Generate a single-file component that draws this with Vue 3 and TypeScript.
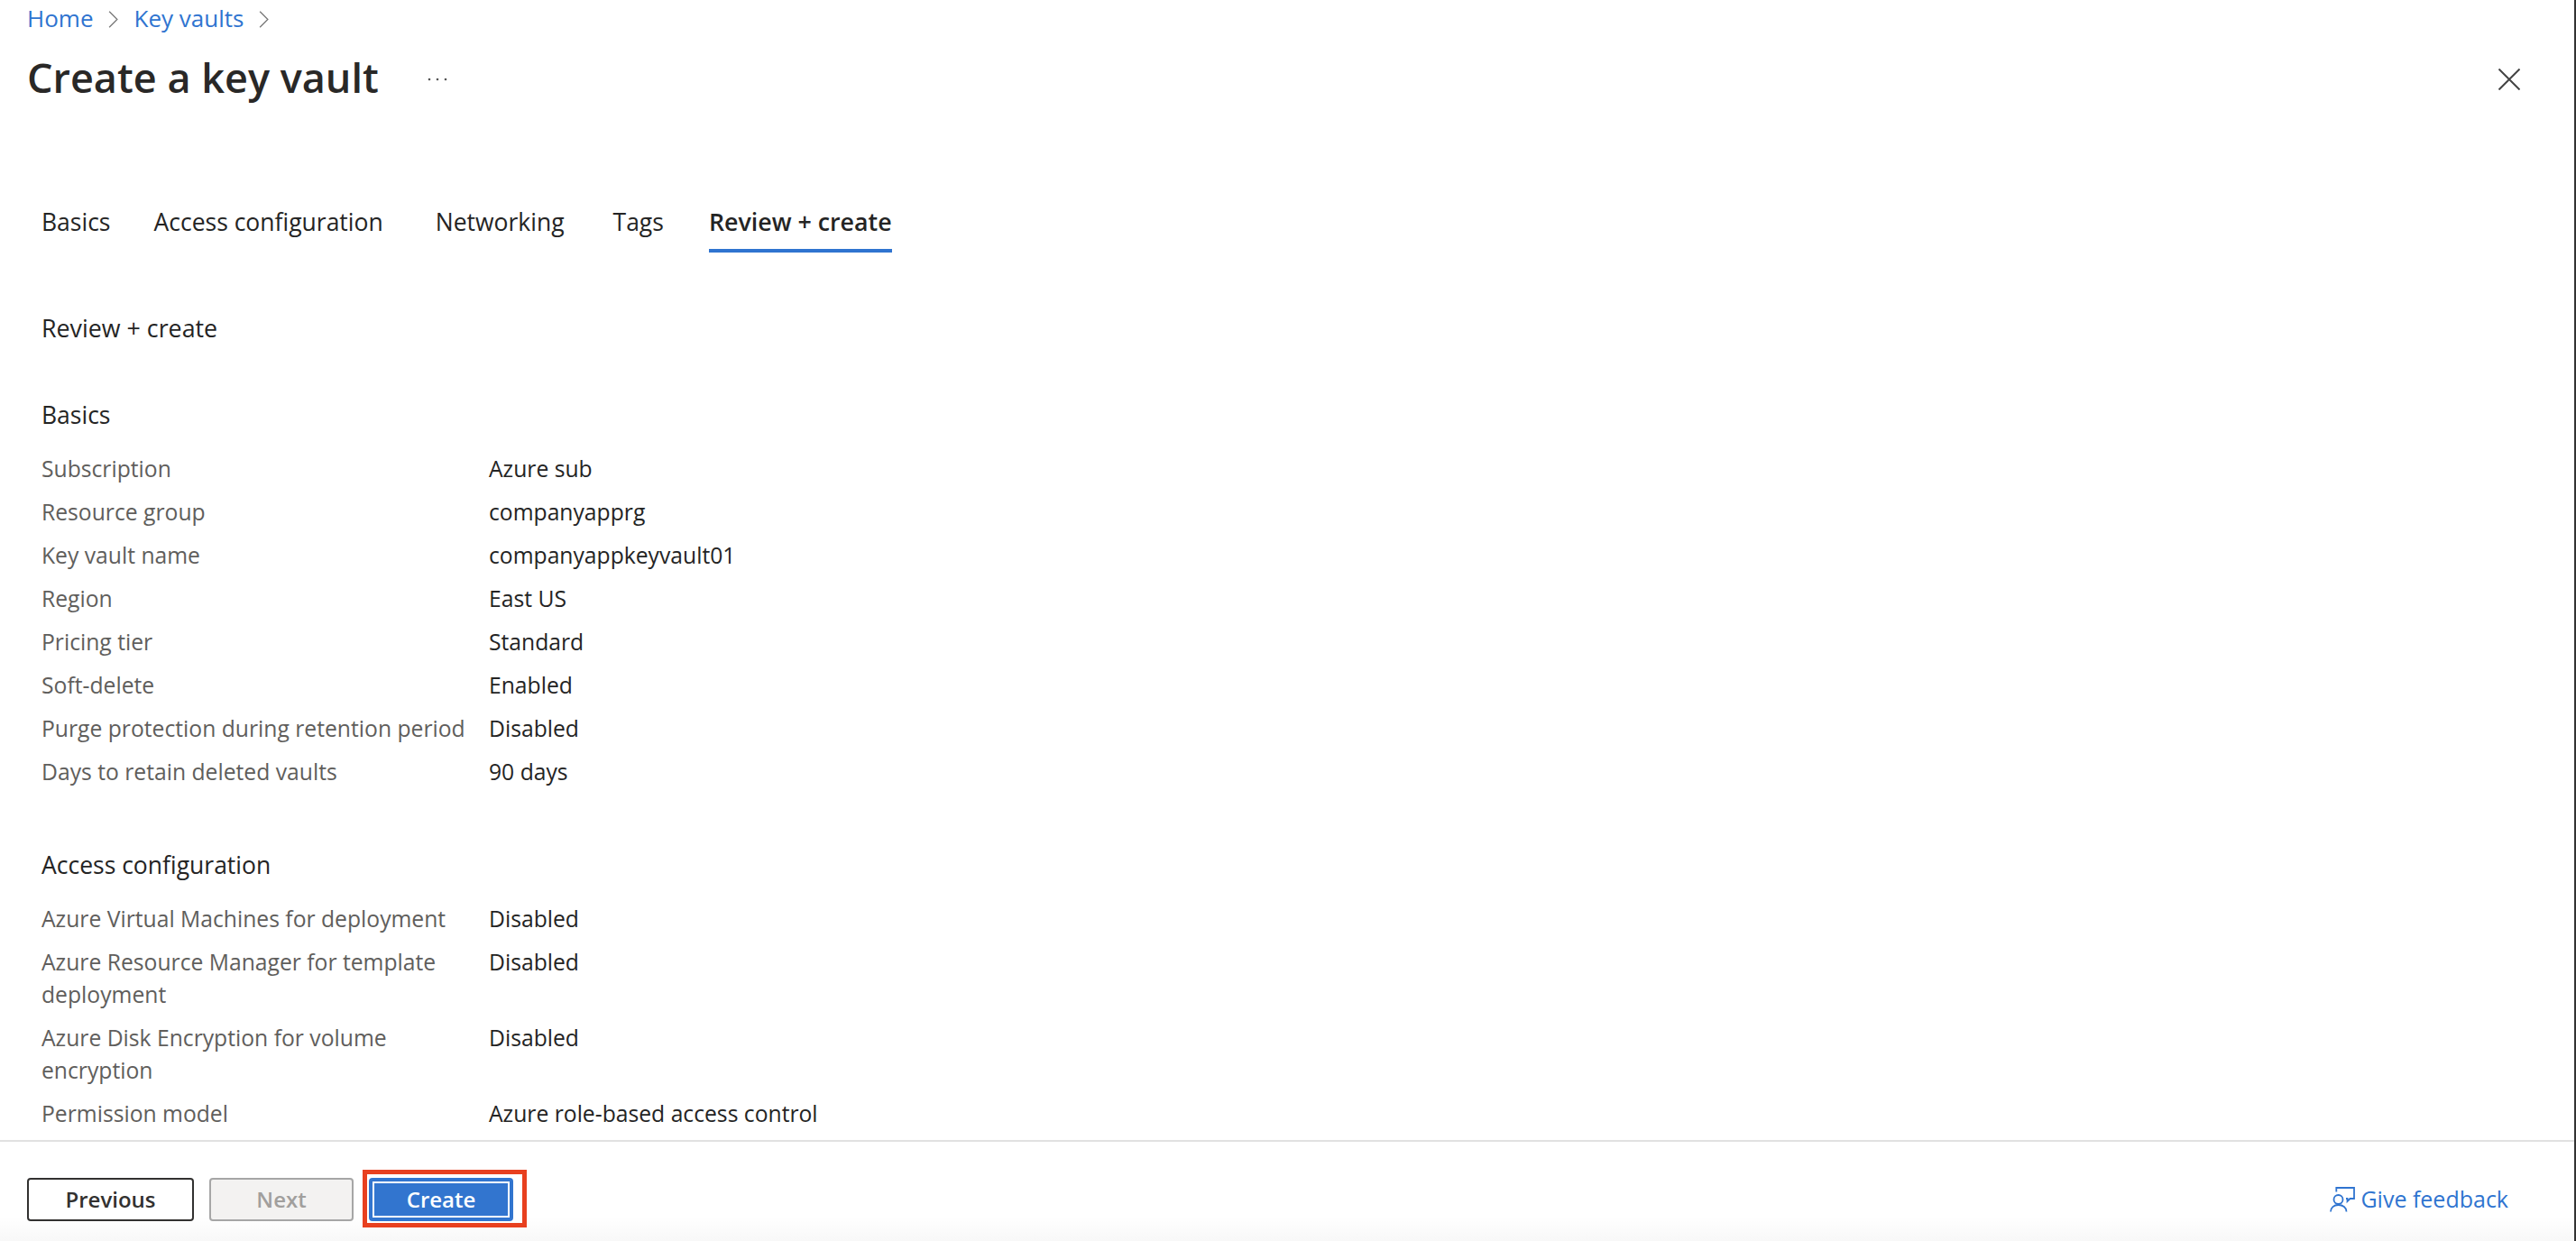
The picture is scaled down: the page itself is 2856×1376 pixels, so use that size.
<script setup lang="ts">
interface Row { label: string; value: string }
const basics: Row[] = [
  { label: 'Subscription', value: 'Azure sub' },
  { label: 'Resource group', value: 'companyapprg' },
  { label: 'Key vault name', value: 'companyappkeyvault01' },
  { label: 'Region', value: 'East US' },
  { label: 'Pricing tier', value: 'Standard' },
  { label: 'Soft-delete', value: 'Enabled' },
  { label: 'Purge protection during retention period', value: 'Disabled' },
  { label: 'Days to retain deleted vaults', value: '90 days' },
]
const access: Row[] = [
  { label: 'Azure Virtual Machines for deployment', value: 'Disabled' },
  { label: 'Azure Resource Manager for template deployment', value: 'Disabled' },
  { label: 'Azure Disk Encryption for volume encryption', value: 'Disabled' },
  { label: 'Permission model', value: 'Azure role-based access control' },
]
const tabs = ['Basics', 'Access configuration', 'Networking', 'Tags', 'Review + create']
</script>

<template>
  <div class="page">
    <nav class="crumbs">
      <a class="link">Home</a>
      <svg class="chev" viewBox="0 0 12 24"><path d="M1 2l10 10-10 10" /></svg>
      <a class="link">Key vaults</a>
      <svg class="chev" viewBox="0 0 12 24"><path d="M1 2l10 10-10 10" /></svg>
    </nav>
    <header class="head">
      <h1>Create a key vault</h1>
      <svg class="more" viewBox="0 0 22 4"><circle cx="2" cy="2" r="1.300" /><circle cx="11" cy="2" r="1.300" /><circle cx="20" cy="2" r="1.300" /></svg>
      <svg class="close" viewBox="0 0 24 24"><path d="M0.500 0.500l23 23M23.500 0.500l-23 23" /></svg>
    </header>
    <div class="tabs">
      <span v-for="(t, i) in tabs" :key="t" class="tab" :class="{ active: i === 4 }">{{ t }}</span>
    </div>
    <main class="content">
      <div class="intro">Review + create</div>
      <h2>Basics</h2>
      <div v-for="r in basics" :key="r.label" class="row">
        <div class="label">{{ r.label }}</div>
        <div class="value">{{ r.value }}</div>
      </div>
      <h2 class="second">Access configuration</h2>
      <div v-for="r in access" :key="r.label" class="row">
        <div class="label">{{ r.label }}</div>
        <div class="value">{{ r.value }}</div>
      </div>
    </main>
    <footer class="foot">
      <button class="btn prev">Previous</button>
      <button class="btn next">Next</button>
      <span class="mark"><button class="btn create"><span class="inner">Create</span></button></span>
      <a class="feedback">
        <svg class="fb" viewBox="0 0 28 28">
          <path d="M7.300 5.500V1H27V13H22.500L19.500 16V13H18" />
          <circle cx="9.500" cy="14" r="5" />
          <path d="M1 27.500c0-4.500 3.500-7.500 8.500-7.500s9 3 9 7.500" />
        </svg>
        <span class="fb-text">Give feedback</span>
      </a>
    </footer>
  </div>
</template>

<style scoped>
.page {
  height: 1376px;
  display: flex;
  flex-direction: column;
  overflow: hidden;
  border-right: 2px solid #333;
  box-sizing: border-box;
  font-family: "Open Sans", "Noto Sans", sans-serif;
  color: #242424;
  background: #fff;
  font-size: 24.700px;
}
.crumbs {
  height: 40px;
  display: flex;
  align-items: center;
  padding-left: 30px;
  flex: none;
  font-size: 26px;
}
.link { color: #2f74d0; }
.chev {
  width: 11px;
  height: 21px;
  margin: 2px 17px 0;
  fill: none;
  stroke: #777;
  stroke-width: 1.500;
}
.head {
  height: 91px;
  flex: none;
  display: flex;
  align-items: center;
  padding-left: 30px;
}
h1 {
  margin: 0;
  font-size: 45px;
  font-weight: 600;
  color: #292827;
}
.more {
  margin-left: 54px;
  width: 22px;
  height: 4px;
  fill: #555;
  position: relative;
  top: 2px;
}
.close {
  margin-left: auto;
  margin-right: 60px;
  width: 24px;
  height: 24px;
  fill: none;
  stroke: #444;
  stroke-width: 2;
  position: relative;
  top: 2px;
}
.tabs {
  margin-top: 97px;
  display: flex;
  padding-left: 46px;
  flex: none;
  font-size: 26.500px;
}
.tab {
  padding-bottom: 12px;
  line-height: 36px;
  border-bottom: 4px solid transparent;
}
.tab:nth-child(1) { margin-right: 48px; }
.tab:nth-child(2) { margin-right: 58px; }
.tab:nth-child(3) { margin-right: 54px; }
.tab:nth-child(4) { margin-right: 50px; }
.tab.active {
  font-weight: 600;
  font-size: 26.800px;
  border-bottom-color: #2f74d0;
}
.content {
  flex: 1;
  min-height: 0;
  overflow: hidden;
  padding: 66px 0 0 46px;
}
.intro { line-height: 36px; margin-bottom: 60px; color: #242424; font-size: 26.800px; }
h2 {
  margin: 0 0 24px;
  font-size: 26.500px;
  font-weight: 400;
  line-height: 36px;
  color: #242424;
}
h2.second { margin-top: 55px; }
.row {
  display: flex;
  line-height: 36px;
  padding-bottom: 12px;
}
.label { width: 496px; padding-right: 16px; box-sizing: border-box; color: #605e5c; }
.value { color: #242424; }
.foot {
  flex: none;
  height: 112px;
  box-sizing: border-box;
  border-top: 2px solid #e1e1e1;
  display: flex;
  align-items: flex-start;
  padding: 31px 73px 0 30px;
  background: linear-gradient(to bottom, #fff 75%, #f8f8f8);
}
.btn {
  height: 48px;
  box-sizing: border-box;
  font: 600 24px "Open Sans", "Noto Sans", sans-serif;
  border-radius: 4px;
  padding: 0 0 2px;
}
.prev { width: 185px; margin-top: 9px; border: 2px solid #323130; background: #fff; color: #323130; }
.next { width: 160px; margin-top: 9px; margin-left: 17px; border: 2px solid #a6a6a6; background: #f3f2f1; color: #a19f9d; }
.mark { margin-left: 10px; border: 5px solid #e8401f; padding: 4px 10px 2px 2px; display: flex; }
.create {
  width: 160px;
  border: none;
  background: #3275cf;
  color: #fff;
  padding: 4px;
}
.inner {
  display: flex;
  align-items: center;
  justify-content: center;
  height: 100%;
  border: 2px solid #fff;
  box-sizing: border-box;
  padding-bottom: 2px;
}
.feedback {
  margin-left: auto;
  margin-top: 19px;
  display: flex;
  align-items: center;
  gap: 6px;
  color: #2f74d0;
  font-size: 25px;
}
.fb-text { line-height: 28px; margin-top: -3px; }
.fb { width: 28px; height: 28px; fill: none; stroke: #2f74d0; stroke-width: 1.800; }
</style>

<style>
body { margin: 0; }
</style>
